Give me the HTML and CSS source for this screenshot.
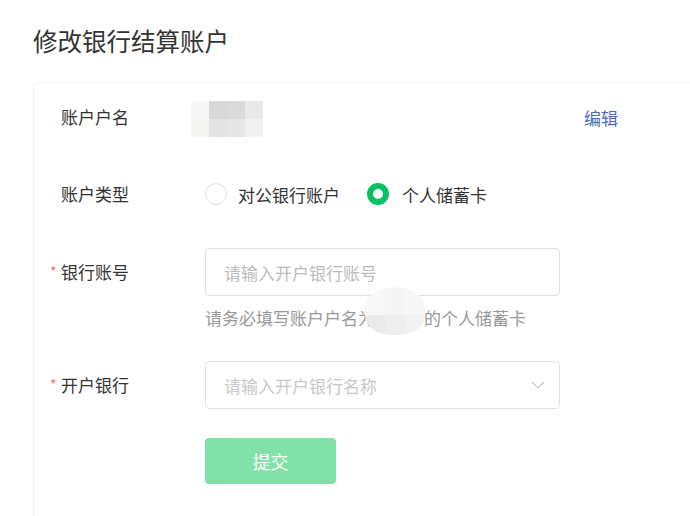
FILE: index.html
```html
<!DOCTYPE html>
<html lang="zh-CN">
<head>
<meta charset="utf-8">
<title>修改银行结算账户</title>
<link rel="stylesheet" href="styles.css">
</head>
<body>
<div class="page">
  <h1 class="title">修改银行结算账户</h1>
  <div class="card">
    <div class="row">
      <div class="label">账户户名</div>
      <div class="mosaic">
        <i class="m1"></i><i class="m2"></i><i class="m3"></i><i class="m4"></i>
        <i class="m5"></i><i class="m6"></i><i class="m7"></i><i class="m8"></i>
      </div>
      <a class="edit">编辑</a>
    </div>

    <div class="row row-type">
      <div class="label">账户类型</div>
      <div class="radios">
        <span class="radio"></span><span class="radio-text">对公银行账户</span>
        <span class="radio radio-on"></span><span class="radio-text radio-text-on">个人储蓄卡</span>
      </div>
    </div>

    <div class="row row-input">
      <div class="label"><span class="req">*</span>银行账号</div>
      <div class="field"><span class="placeholder">请输入开户银行账号</span></div>
    </div>
    <div class="hint">请务必填写账户户名为<span class="name"><span class="oval"><i class="o1"></i><i class="o2"></i><i class="o3"></i><i class="o4"></i><i class="o5"></i><i class="o6"></i></span></span>的个人储蓄卡</div>

    <div class="row row-select">
      <div class="label"><span class="req">*</span>开户银行</div>
      <div class="field field-select">
        <span class="placeholder">请输入开户银行名称</span>
        <svg class="chevron" width="14" height="8" viewBox="0 0 14 8"><polyline points="1,1 7,7 13,1" fill="none" stroke="#c8c8c8" stroke-width="1.1"/></svg>
      </div>
    </div>

    <button class="submit" type="button">提交</button>
  </div>
</div>
</body>
</html>
```

FILE: styles.css
```css
html, body {
  margin: 0;
  padding: 0;
  background: #fff;
  overflow: hidden;
}
body {
  font-family: "Noto Sans CJK SC", "Noto Sans", sans-serif;
  color: #333;
}
.page {
  padding: 25px 0 0 33px;
}
.title {
  margin: 0;
  font-size: 24.5px;
  line-height: 32px;
  font-weight: 400;
  color: #333;
}
.card {
  margin-top: 25px;
  width: 720px;
  min-height: 470px;
  box-sizing: border-box;
  border: 1px solid #f1f1f1;
  border-radius: 5px;
  padding: 10px 0 0 27px;
}
.row {
  display: flex;
  align-items: center;
  height: 48px;
}
.label {
  width: 144px;
  flex: none;
  font-size: 17px;
  line-height: 22px;
  color: #333;
}
.req {
  display: inline-block;
  width: 11px;
  margin-left: -11px;
  color: #f56c6c;
  font-size: 14px;
  vertical-align: top;
  line-height: 20px;
}
.mosaic {
  margin-left: -14px;
  display: grid;
  grid-template-columns: repeat(4, 18px);
  grid-template-rows: repeat(2, 18px);
  margin-top: 3px;
}
.mosaic i { display: block; }
.m1 { background: #f7f7f7; }
.m2 { background: #d9d8d9; }
.m3 { background: #dadada; }
.m4 { background: #e8e9e9; }
.m5 { background: #f5f5f4; }
.m6 { background: #e3e3e3; }
.m7 { background: #e6e6e6; }
.m8 { background: #f0f1f1; }
.edit {
  margin-left: 321px;
  font-size: 17px;
  color: #4a6db5;
  cursor: pointer;
}
.row-type {
  margin-top: 29px;
}
.radios {
  display: flex;
  align-items: center;
  font-size: 17px;
}
.radio {
  width: 22px;
  height: 22px;
  box-sizing: border-box;
  border: 1px solid #e0e0e0;
  border-radius: 50%;
  flex: none;
}
.radio-on {
  border: 6px solid #07c160;
  margin-left: 27px;
}
.radio-text {
  margin-left: 11px;
  color: #333;
}
.radio-text-on {
  margin-left: 13px;
}
.row-input {
  margin-top: 30px;
}
.field {
  width: 355px;
  height: 48px;
  box-sizing: border-box;
  border: 1px solid #e1e1e1;
  border-radius: 4px;
  display: flex;
  align-items: center;
  padding: 0 14px 0 18px;
}
.placeholder {
  font-size: 17px;
  color: #bcbcbc;
}
.field-select {
  justify-content: space-between;
}
.field-select .placeholder {
  color: #c8c8c8;
}
.chevron { flex: none; }
.hint {
  margin: 11px 0 0 144px;
  font-size: 17px;
  line-height: 22px;
  color: #999;
}
.name {
  display: inline-block;
  width: 49px;
  height: 22px;
  vertical-align: top;
  position: relative;
}
.oval {
  position: absolute;
  left: -10px;
  top: -20px;
  width: 60px;
  height: 48px;
  border-radius: 50% 50% 45% 45% / 45% 45% 40% 40%;
  overflow: hidden;
  display: grid;
  grid-template-columns: 20px 20px 20px;
  grid-template-rows: 28px 20px;
}
.oval i { display: block; }
.o1 { background: #f8f8f8; }
.o2 { background: #f5f5f5; }
.o3 { background: #f7f7f7; }
.o4 { background: #e9eaea; }
.o5 { background: #eeeeee; }
.o6 { background: #f2f2f2; }
.row-select {
  margin-top: 32px;
}
.submit {
  display: block;
  margin: 29px 0 0 144px;
  width: 131px;
  height: 46px;
  border: none;
  border-radius: 4px;
  background: #80e2a8;
  color: #fff;
  font-family: inherit;
  font-size: 18px;
  padding: 0;
}
```
